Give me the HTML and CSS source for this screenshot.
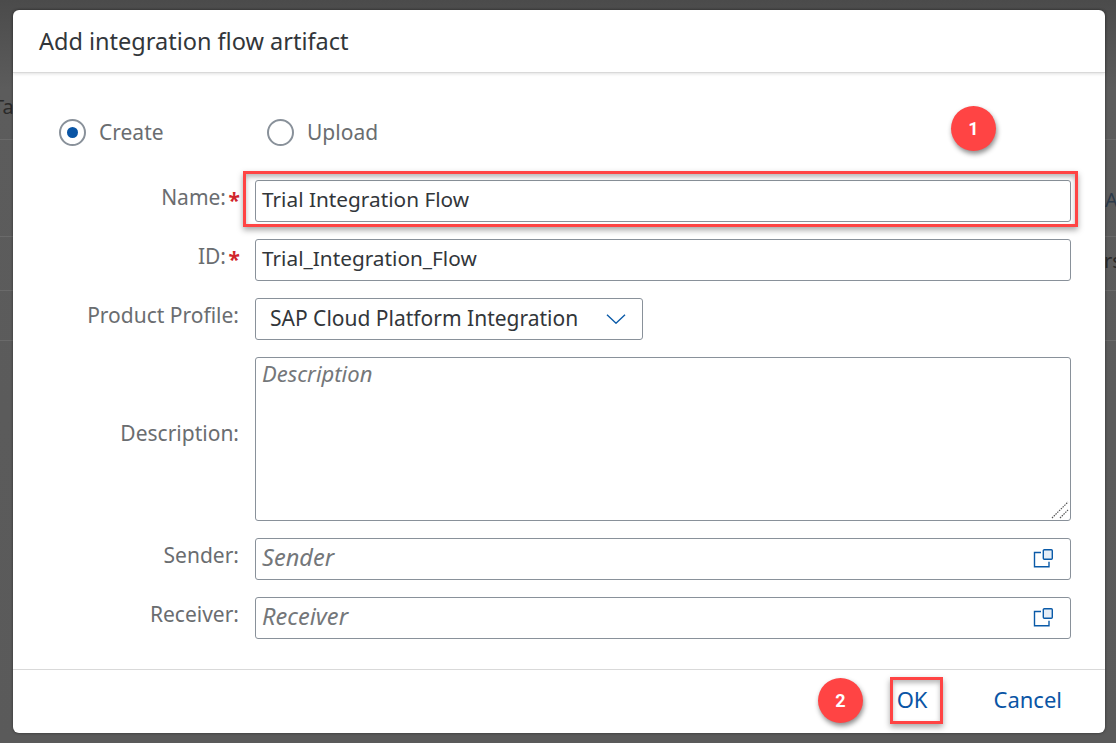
FILE: index.html
```html
<!DOCTYPE html>
<html>
<head>
<meta charset="utf-8">
<title>Add integration flow artifact</title>
<link rel="stylesheet" href="styles.css">
</head>
<body>
<div class="backdrop">
  <div class="bg-text bg-ta">Ta</div>
  <div class="bg-text bg-a">A</div>
  <div class="bg-text bg-rs">rs</div>
  <div class="bg-line line1"></div>
  <div class="bg-line line2"></div>
  <div class="bg-line line3"></div>
  <div class="bg-line line4"></div>
</div>

<div class="dialog">
  <div class="dialog-header">Add integration flow artifact</div>
  <div class="dialog-body">
    <div class="radios">
      <label class="radio"><span class="radio-dot on"></span>Create</label>
      <label class="radio"><span class="radio-dot"></span>Upload</label>
    </div>
    <div class="form">
      <div class="label">Name:<span class="req">*</span></div>
      <div class="input">Trial Integration Flow</div>
      <div class="label">ID:<span class="req">*</span></div>
      <div class="input">Trial_Integration_Flow</div>
      <div class="label">Product Profile:</div>
      <div class="select">
        <span class="select-text">SAP Cloud Platform Integration</span>
        <svg width="20" height="10" viewBox="0 0 20 10"><path d="M1 .8 10 9.2 19 .8" fill="none" stroke="#0a5aa8" stroke-width="1.4"/></svg>
      </div>
      <div class="label label-mid">Description:</div>
      <div class="input textarea">
        <span class="ph">Description</span>
        <svg class="grip" width="18" height="18" viewBox="0 0 18 18"><path d="M1 17 17 1M9 17 17 9" fill="none" stroke="#555" stroke-width="1.2" stroke-dasharray="1.5 1"/></svg>
      </div>
      <div class="label">Sender:</div>
      <div class="input with-icon">
        <span class="ph">Sender</span>
        <svg width="20" height="20" viewBox="0 0 20 20"><use href="#vh"/></svg>
      </div>
      <div class="label">Receiver:</div>
      <div class="input with-icon">
        <span class="ph">Receiver</span>
        <svg width="20" height="20" viewBox="0 0 20 20"><use href="#vh"/></svg>
      </div>
    </div>
  </div>
  <div class="dialog-footer">
    <span class="btn">OK</span>
    <span class="btn">Cancel</span>
  </div>
</div>

<svg width="0" height="0" class="defs">
  <symbol id="vh" viewBox="0 0 20 20">
    <path d="M8 3.500H1.500v14.300h14.500v-5" fill="none" stroke="#0a5aa8" stroke-width="1.400"/>
    <rect x="10.300" y=".7" width="9" height="9.500" rx="1" fill="#e6eef7" stroke="#0a5aa8" stroke-width="1.400"/>
  </symbol>
</svg>

<div class="mark mark-name"></div>
<div class="mark mark-ok"></div>
<div class="step step1">1</div>
<div class="step step2">2</div>
</body>
</html>
```

FILE: styles.css
```css
* {
box-sizing:border-box;
}
html, body {
margin:0;
height:743px;
overflow:hidden;
}
body {
position:relative;
width:1116px;
background:#555;
font-family:"Noto Sans", sans-serif;
color:#32363a;
}
.defs {
position:absolute;
}

/* page behind the dialog */
.backdrop {
position:absolute;
inset:0;
background:linear-gradient(#4b4b4b, #5c5c5c 12%, #5a5a5a);
}
.bg-text {
position:absolute;
font-size:20px;
color:#2a2a2a;
}
.bg-ta {
left:-7px;
top:93px;
}
.bg-a {
left:1105px;
top:186px;
color:#2c3a4a;
}
.bg-rs {
left:1104px;
top:247px;
}
.bg-line {
position:absolute;
left:0;
right:0;
height:1px;
background:#6a6a6a;
}
.line1 { top:139px; }
.line2 { top:236px; }
.line3 { top:290px; }
.line4 { top:340px; }

/* dialog */
.dialog {
position:absolute;
left:13px;
top:10px;
width:1092px;
height:723px;
background:#fff;
border-radius:6px;
display:flex;
flex-direction:column;
box-shadow:0 0 3px rgba(0,0,0,.5);
}
.dialog-header {
height:63px;
padding:13px 26px 0;
font-size:23.500px;
line-height:36px;
border-bottom:1px solid #d9d9d9;
box-shadow:0 1px 3px rgba(0,0,0,.12);
}
.dialog-body {
flex:1;
padding:43px 34px 0 0;
}
.radios {
display:flex;
height:32px;
padding-left:46px;
}
.radio {
display:flex;
align-items:center;
width:208px;
font-size:21px;
color:#6a6d70;
}
.radio-dot {
width:27px;
height:27px;
margin-right:13px;
border:2px solid #89919a;
border-radius:50%;
display:flex;
align-items:center;
justify-content:center;
}
.radio-dot.on::after {
content:"";
width:11px;
height:11px;
border-radius:50%;
background:#0a55a5;
}
.form {
margin-top:32px;
display:grid;
grid-template-columns:242px 1fr;
column-gap:0;
row-gap:17px;
}
.label {
padding:2px 16px 0 0;
text-align:right;
font-size:21px;
line-height:30px;
color:#6a6d70;
}
.label-mid {
align-self:center;
padding-bottom:14px;
}
.req {
display:inline-block;
width:14px;
margin-right:-1px;
vertical-align:-3px;
line-height:20px;
text-align:right;
color:#d1242b;
font-weight:bold;
}
.input {
height:42px;
padding:0 6px;
border:1px solid #89919a;
border-radius:3px;
font-size:20.800px;
line-height:36px;
background:#fff;
}
.textarea {
height:164px;
position:relative;
line-height:30px;
}
.grip {
position:absolute;
right:1px;
bottom:1px;
}
.ph {
color:#74777a;
font-style:italic;
font-size:22px;
}
.with-icon {
display:flex;
justify-content:space-between;
align-items:center;
padding-right:17px;
}
.with-icon .ph {
padding-bottom:4px;
font-size:23.600px;
}
.select {
width:388px;
height:42px;
padding:0 16px 0 14px;
border:1px solid #89919a;
border-radius:3px;
display:flex;
align-items:center;
justify-content:space-between;
font-size:21px;
}
.select-text {
padding-bottom:2px;
}
.dialog-footer {
height:64px;
border-top:1px solid #d9d9d9;
display:flex;
justify-content:flex-end;
align-items:center;
gap:66px;
padding:0 43px 6px 0;
font-size:22px;
color:#0a55a5;
}

/* annotations */
.mark {
position:absolute;
border:3px solid #ff4444;
box-shadow:0 3px 6px rgba(0,0,0,.35), inset 0 3px 5px rgba(0,0,0,.28);
}
.mark-name {
left:243px;
top:171px;
width:835px;
height:56px;
}
.mark-ok {
left:890px;
top:677px;
width:53px;
height:47px;
}
.step {
position:absolute;
width:45px;
height:45px;
border-radius:50%;
background:#ff4444;
color:#fff;
font-family:"Roboto", sans-serif;
font-weight:bold;
font-size:18px;
line-height:45px;
text-align:center;
box-shadow:1px 3px 5px rgba(0,0,0,.45);
}
.step1 {
left:951px;
top:106px;
}
.step2 {
left:818px;
top:678px;
}
```
